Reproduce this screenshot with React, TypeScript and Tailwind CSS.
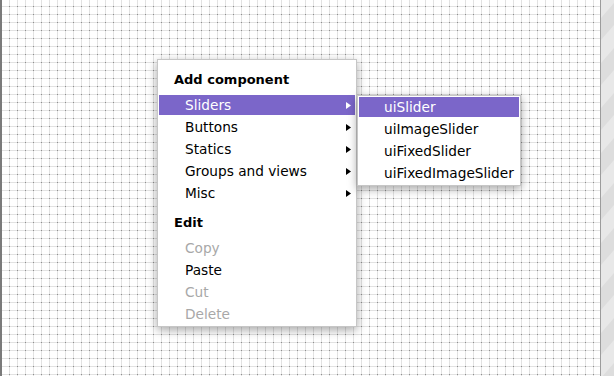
import React from "react";

const FONT = { fontFamily: '"DejaVu Sans", "Liberation Sans", sans-serif' };

function Arrow({ white }: { white?: boolean }) {
  return (
    <svg width="5" height="7" viewBox="0 0 5 7" className="shrink-0">
      <polygon points="0,0 5,3.5 0,7" fill={white ? "#ffffff" : "#000000"} />
    </svg>
  );
}

function Item({
  label,
  active,
  disabled,
  sub,
}: {
  label: string;
  active?: boolean;
  disabled?: boolean;
  sub?: boolean;
}) {
  return (
    <div
      className={
        "flex h-[20px] items-center pl-[26px] pr-[4px] text-[13.7px] leading-none " +
        (active ? "bg-[#7b66c9] text-white" : disabled ? "text-[#a8a8a8]" : "text-black")
      }
    >
      <span className="flex-1 pt-[2px]">{label}</span>
      {sub && <Arrow white={active} />}
    </div>
  );
}

function Header({ label }: { label: string }) {
  return (
    <div className="flex h-[22px] items-center pl-[15px] text-[13px] font-bold leading-none text-black">
      {label}
    </div>
  );
}

export default function App() {
  const stripes: number[] = [];
  for (let k = -1; k < 10; k++) stripes.push(k * 45 + 18);
  return (
    <div className="relative flex h-[376px] w-[614px] overflow-hidden bg-white" style={FONT}>
      <div className="w-[2px] bg-[#7a7a7a]" />
      <div className="relative flex-1">
        <svg className="absolute inset-0 h-full w-full">
          <defs>
            <pattern id="grid" width="8" height="8" patternUnits="userSpaceOnUse">
              <rect x="7" y="0" width="1" height="8" fill="#e2e2e2" />
              <rect x="0" y="6" width="8" height="1" fill="#e2e2e2" />
              <rect x="7" y="6" width="1" height="1" fill="#8e8e8e" />
            </pattern>
          </defs>
          <rect width="100%" height="100%" fill="url(#grid)" />
        </svg>
      </div>
      <div className="w-px bg-[#9c9c9c]" />
      <div className="relative w-[13px] bg-[#e8e8e8]">
        <svg className="absolute inset-0" width="13" height="376">
          {stripes.map((a) => (
            <polygon
              key={a}
              points={`0,${a} 13,${a - 15} 13,${a + 7} 0,${a + 22}`}
              fill="#dddddd"
            />
          ))}
        </svg>
      </div>

      {/* Main context menu */}
      <div className="absolute left-[157px] top-[59px] flex h-[268px] w-[200px] flex-col border border-[#c6c6c6] bg-white px-px pt-[8px] shadow-[0_3px_9px_rgba(0,0,0,0.35)]">
        <Header label="Add component" />
        <div className="mt-[5px] flex flex-col gap-[2px]">
          <Item label="Sliders" active sub />
          <Item label="Buttons" sub />
          <Item label="Statics" sub />
          <Item label="Groups and views" sub />
          <Item label="Misc" sub />
        </div>
        <div className="mt-[8px]">
          <Header label="Edit" />
        </div>
        <div className="mt-[5px] flex flex-col gap-[2px]">
          <Item label="Copy" disabled />
          <Item label="Paste" />
          <Item label="Cut" disabled />
          <Item label="Delete" disabled />
        </div>
      </div>

      {/* Submenu */}
      <div className="absolute left-[357px] top-[95px] flex w-[164px] flex-col gap-[2px] border border-[#c6c6c6] bg-white px-px pb-[2px] pt-px shadow-[0_3px_9px_rgba(0,0,0,0.35)]">
        {["uiSlider", "uiImageSlider", "uiFixedSlider", "uiFixedImageSlider"].map((s, i) => (
          <div
            key={s}
            className={
              "flex h-[20px] items-center pl-[25px] pt-[2px] text-[13.7px] leading-none " +
              (i === 0 ? "bg-[#7b66c9] text-white" : "text-black")
            }
          >
            {s}
          </div>
        ))}
      </div>
    </div>
  );
}
